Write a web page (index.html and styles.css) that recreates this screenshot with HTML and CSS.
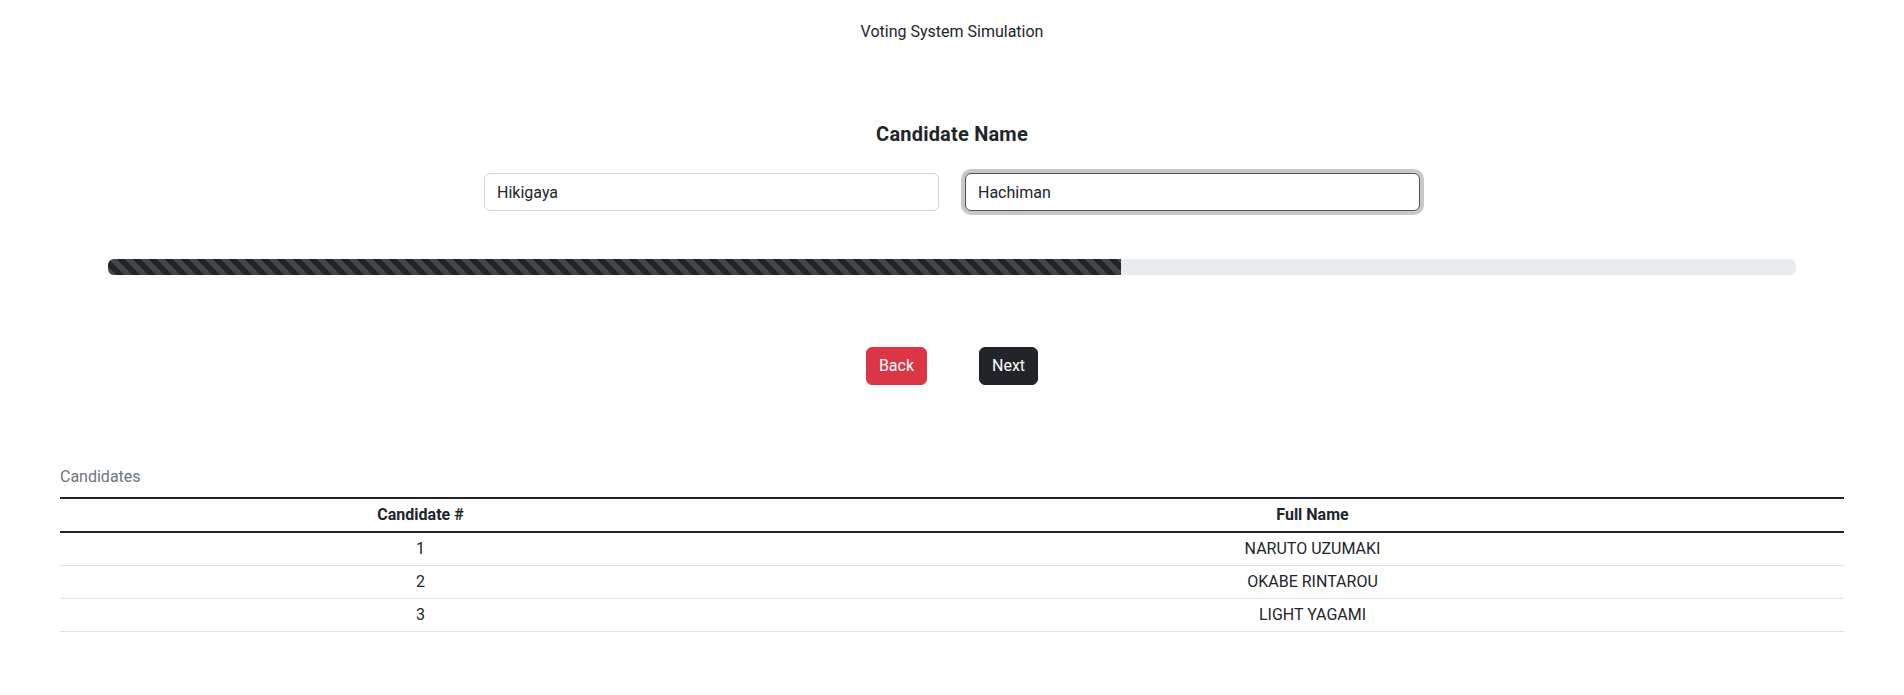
FILE: index.html
```html
<!DOCTYPE html>
<html lang="en">
<head>
<meta charset="utf-8">
<title>Voting System Simulation</title>
<link rel="stylesheet" href="styles.css">
</head>
<body>
<header class="app-title">Voting System Simulation</header>
<main class="wizard">
  <h5 class="step-heading">Candidate Name</h5>
  <div class="name-row">
    <input class="form-control" type="text" value="Hikigaya">
    <input class="form-control is-focused" type="text" value="Hachiman" autofocus>
  </div>
  <div class="progress">
    <div class="progress-bar" style="width: 60%"></div>
  </div>
  <div class="actions">
    <button class="btn btn-danger" type="button">Back</button>
    <button class="btn btn-dark" type="button">Next</button>
  </div>
</main>
<section class="list">
  <table class="candidates">
    <caption>Candidates</caption>
    <colgroup><col class="col-num"><col></colgroup>
    <thead>
      <tr><th>Candidate #</th><th>Full Name</th></tr>
    </thead>
    <tbody>
      <tr><td>1</td><td>NARUTO UZUMAKI</td></tr>
      <tr><td>2</td><td>OKABE RINTAROU</td></tr>
      <tr><td>3</td><td>LIGHT YAGAMI</td></tr>
    </tbody>
  </table>
</section>
</body>
</html>
```

FILE: styles.css
```css
html, body { margin: 0; padding: 0; }
body {
  font-family: Roboto, "Liberation Sans", sans-serif;
  font-size: 16px;
  line-height: 1.5;
  color: #212529;
  background: #fff;
}
.app-title {
  text-align: center;
  padding-top: 20px;
  font-size: 16px;
}
.wizard {
  display: flex;
  flex-direction: column;
  align-items: stretch;
}
.step-heading {
  margin: 78px 0 0;
  font-size: 20px;
  line-height: 24px;
  font-weight: 700;
  letter-spacing: 0.2px;
  text-align: center;
}
.name-row {
  display: grid;
  grid-template-columns: 455px 455px;
  column-gap: 26px;
  justify-content: center;
  margin-top: 27px;
}
.form-control {
  box-sizing: border-box;
  height: 38px;
  padding: 6px 12px;
  font: inherit;
  font-size: 16px;
  color: #212529;
  background: #fff;
  border: 1px solid #ced4da;
  border-radius: 6px;
  outline: none;
}
.form-control.is-focused {
  border-color: #4d5258;
  box-shadow: 0 0 0 4px rgba(33, 37, 41, 0.25);
  caret-color: #000;
}
.progress {
  margin: 48px 108px 0;
  height: 16px;
  background: #e9ecef;
  border-radius: 6px;
  overflow: hidden;
  display: flex;
}
.progress-bar {
  background-color: #212529;
  background-image: linear-gradient(45deg, rgba(255,255,255,.15) 25%, transparent 25%, transparent 50%, rgba(255,255,255,.15) 50%, rgba(255,255,255,.15) 75%, transparent 75%, transparent);
  background-size: 16px 16px;
}
.actions {
  display: flex;
  justify-content: center;
  gap: 52px;
  margin-top: 72px;
}
.btn {
  box-sizing: border-box;
  height: 38px;
  padding: 6px 12px;
  font: inherit;
  font-size: 16px;
  color: #fff;
  border: 1px solid transparent;
  border-radius: 6px;
}
.btn-danger { background: #dc3545; border-color: #dc3545; }
.btn-dark { background: #212529; border-color: #212529; }
.list {
  padding: 72px 60px 0;
}
.candidates {
  width: 100%;
  border-collapse: collapse;
  caption-side: top;
}
.candidates caption {
  text-align: left;
  color: #6c757d;
  padding: 8px 0;
}
.col-num { width: 721px; }
.candidates thead tr { border-top: 2px solid #212529; border-bottom: 2px solid #212529; }
.candidates th, .candidates td {
  padding: 4px;
  text-align: center;
  line-height: 24px;
}
.candidates th { font-weight: 700; }
.candidates tbody tr { border-bottom: 1px solid #dee2e6; }
```
